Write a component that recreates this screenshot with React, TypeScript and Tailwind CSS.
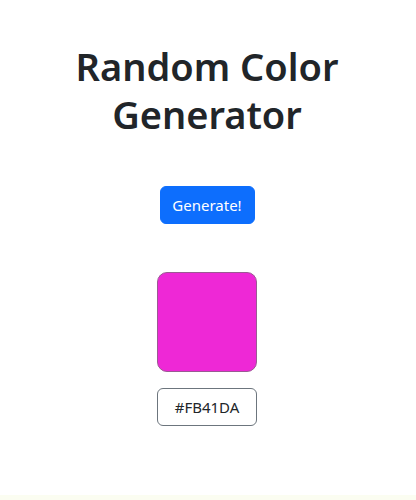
export default function App() {
  const color = "#FB41DA";
  return (
    <div className="min-h-[500px] bg-white flex flex-col">
      <div
        className="flex-1 flex flex-col items-center text-[#212529] pt-[42px] pr-[2px]"
        style={{ fontFamily: '"Noto Sans", "Open Sans", sans-serif' }}
      >
        <h1 className="text-[38px] leading-[48px] font-semibold text-center w-[300px]">
          Random Color Generator
        </h1>
        <button className="mt-[48px] w-[95px] h-[38px] rounded-md bg-[#0d6efd] border border-[#0d6efd] text-white text-[15px] leading-6">
          Generate!
        </button>
        <div className="mt-[48px] w-[100px] h-[100px] rounded-[10px] border border-[#9a5a93] bg-[#ee28d6]" />
        <div className="mt-4 w-[100px] h-[38px] rounded-md border border-[#6c757d] flex items-center justify-center text-[15px]">
          {color}
        </div>
      </div>
      <div className="h-[5px] bg-[#fbfdf1]" />
    </div>
  );
}
